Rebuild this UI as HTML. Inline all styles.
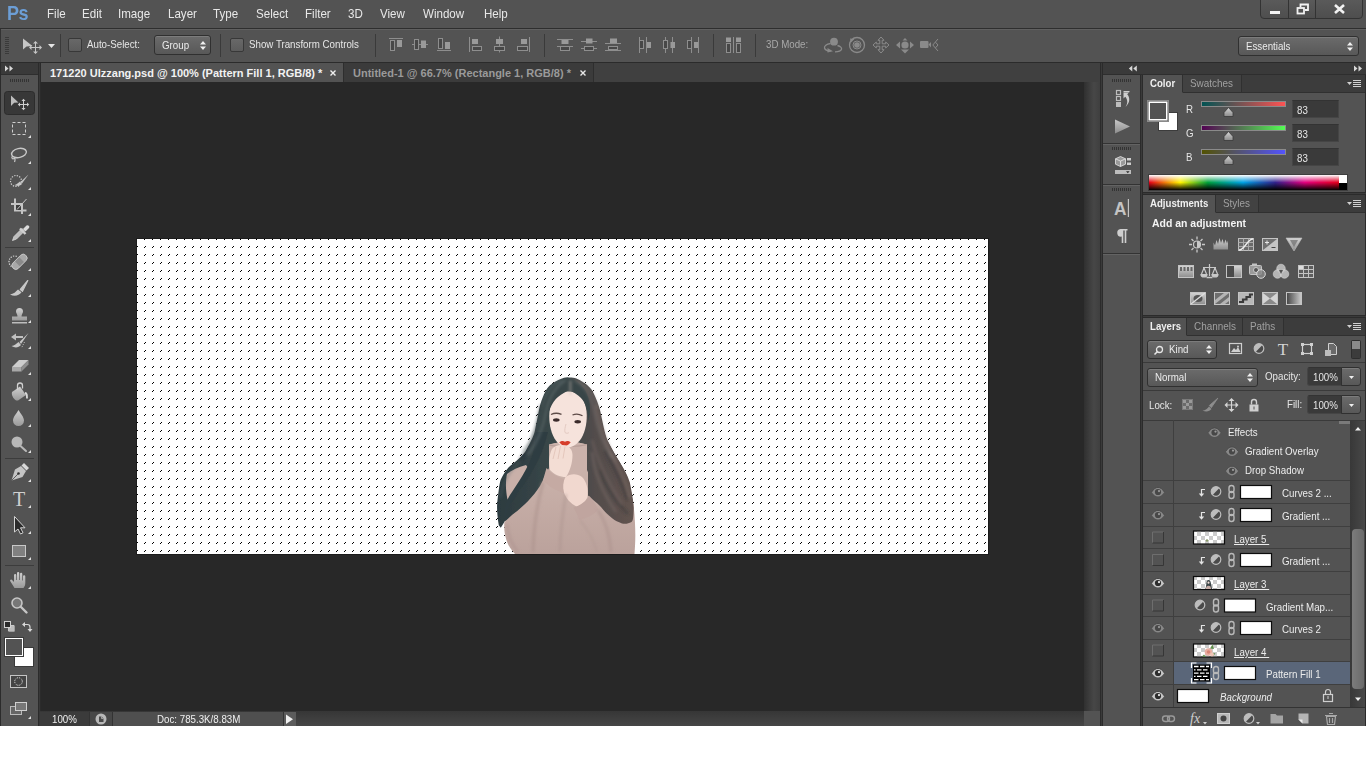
<!DOCTYPE html>
<html lang="en">
<head>
<meta charset="utf-8">
<title>Photoshop</title>
<style>
*{box-sizing:border-box;margin:0;padding:0}
html,body{width:1366px;height:768px;overflow:hidden;background:#fff}
body{font-family:"Liberation Sans","DejaVu Sans",sans-serif;font-size:11px;color:#e6e6e6;position:relative}
.abs{position:absolute}
svg{position:absolute;overflow:visible}
#app{position:absolute;left:0;top:0;width:1366px;height:726px;background:#2b2b2b;overflow:hidden}
.t{position:absolute;white-space:nowrap;line-height:14px;font-size:11px;color:#e6e6e6;transform:scaleX(.885);transform-origin:0 0}
/* menu bar */
#menubar{position:absolute;left:0;top:0;width:1366px;height:28px;background:#535353}
#menubar .mi{position:absolute;top:6px;font-size:13px;color:#e8e8e8;white-space:nowrap;transform:scaleX(.89);transform-origin:0 0}
#pslogo{position:absolute;left:7px;top:-1px;font-size:20.500px;font-weight:bold;color:#6c9ed6;letter-spacing:-0.5px;line-height:28px;transform:scaleX(.88);transform-origin:0 0}
#winctl{position:absolute;left:1260px;top:-1px;width:103px;height:20px;border:1px solid #333;border-radius:0 0 4px 4px;background:linear-gradient(#5a5a5a,#4e4e4e)}
#winctl i{position:absolute;top:0;width:1px;height:18px;background:#333}
/* options bar */
#optbar{position:absolute;left:0;top:29px;width:1366px;height:33px;background:#535353;border-top:1px solid #606060}
.vsep{position:absolute;width:1px;top:34px;height:23px;background:#3a3a3a}
.chk{position:absolute;width:14px;height:14px;border:1px solid #383838;border-radius:2px;background:linear-gradient(#686868,#5c5c5c)}
.dd{position:absolute;border:1px solid #303030;border-radius:3px;background:linear-gradient(#6b6b6b,#585858);box-shadow:inset 0 1px 0 #7c7c7c;color:#ececec;font-size:11px;white-space:nowrap}
.dd span{position:absolute;line-height:14px;transform:scaleX(.885);transform-origin:0 0}
.val{position:absolute;background:#3a3a3a;border:1px solid #454545;border-top-color:#333;color:#f0f0f0}
/* tabs */
#tabbar{position:absolute;left:41px;top:63px;width:1059px;height:19px;background:#404040}
.tab{position:absolute;top:0;height:19px;font-size:11px;line-height:21px;white-space:nowrap}
/* canvas */
#work{position:absolute;left:41px;top:82px;width:1043px;height:629px;background:#282828}
#vscroll{position:absolute;left:1084px;top:82px;width:16px;height:629px;background:linear-gradient(90deg,#303030 0%,#474747 62%,#3f3f3f 100%)}
#status{position:absolute;left:40px;top:711px;width:1060px;height:15px;background:linear-gradient(#363636,#464646)}
#status div{position:absolute;top:1px;height:14px}
/* toolbox */
#toolbox{position:absolute;left:1px;top:63px;width:37px;height:663px;background:#535353}
/* right */
#rstrip{position:absolute;left:1103px;top:63px;width:37px;height:663px;background:#535353}
#rpanels{position:absolute;left:1143px;top:63px;width:223px;height:663px;background:#535353}
.hdr{position:absolute;left:0;top:0;height:12px;background:#3a3a3a;border-bottom:1px solid #2e2e2e}
.ptabs{position:absolute;left:0;width:221px;height:18px;background:#3c3c3c;border-bottom:1px solid #303030}
.ptab{position:absolute;top:0;height:18px;line-height:17px;font-size:11px;color:#a0a0a0;background:#424242;border-right:1px solid #303030;border-bottom:1px solid #303030;padding-left:7px;white-space:nowrap}
.ptab span{display:inline-block;transform:scaleX(.9);transform-origin:0 50%}
.ptab.on span{transform:scaleX(.875)}
.ptab.on{background:#535353;color:#f0f0f0;font-weight:bold;border-bottom:1px solid #535353;height:18px}
.hsep{position:absolute;left:0;width:221px;height:1px;background:#3a3a3a}
.lrow{position:absolute;left:0;width:207px;border-top:1px solid #3f3f3f}
.lname{position:absolute;font-size:11px;line-height:14px;color:#ececec;white-space:nowrap;transform:scaleX(.885);transform-origin:0 0}
.mask{position:absolute;width:32px;height:14px;background:#fff;border:1px solid #2a2a2a}
.box11{position:absolute;left:9px;width:12px;height:12px;border:1px solid #3c3c3c;background:#555;box-shadow:inset 0 0 0 1px #5a5a5a}
</style>
</head>
<body>
<div id="app">
  <div id="menubar">
    <div id="pslogo">Ps</div>
    <div class="mi" style="left:47px">File</div>
    <div class="mi" style="left:82px">Edit</div>
    <div class="mi" style="left:118px">Image</div>
    <div class="mi" style="left:168px">Layer</div>
    <div class="mi" style="left:213px">Type</div>
    <div class="mi" style="left:256px">Select</div>
    <div class="mi" style="left:305px">Filter</div>
    <div class="mi" style="left:348px">3D</div>
    <div class="mi" style="left:380px">View</div>
    <div class="mi" style="left:423px">Window</div>
    <div class="mi" style="left:484px">Help</div>
    <div id="winctl"><i style="left:27px"></i><i style="left:54px"></i>
      <svg style="left:0;top:0" width="102" height="19" viewBox="0 0 102 19">
        <rect x="9" y="11" width="10" height="3" fill="#f2f2f2"/>
        <g fill="none" stroke="#f2f2f2" stroke-width="1.800"><rect x="36.500" y="8" width="6.500" height="5.500"/><path d="M39.500 7V4.500h7.500v5.500h-3"/></g>
        <path d="M74 5l9 8M83 5l-9 8" stroke="#f2f2f2" stroke-width="2.600" fill="none"/>
      </svg>
    </div>
  </div>
  <div class="abs" style="left:0;top:28px;width:1366px;height:1px;background:#2e2e2e"></div>
  <div id="optbar"></div>
  <div id="optleft" class="abs" style="left:0;top:29px;width:1px;height:33px;background:#333"></div>
  <div class="abs" style="left:0;top:62px;width:1366px;height:1px;background:#2b2b2b"></div>
  <!-- options bar contents in page coordinates -->
  <svg style="left:0;top:0" width="1366" height="63" viewBox="0 0 1366 63">
    <g fill="#3a3a3a">
      <rect x="5" y="37" width="4" height="1"/><rect x="5" y="39" width="4" height="1"/><rect x="5" y="41" width="4" height="1"/><rect x="5" y="43" width="4" height="1"/><rect x="5" y="45" width="4" height="1"/><rect x="5" y="47" width="4" height="1"/><rect x="5" y="49" width="4" height="1"/><rect x="5" y="51" width="4" height="1"/><rect x="5" y="53" width="4" height="1"/>
    </g>
    <!-- move tool -->
    <path d="M23 38.500V49.500L26.500 46.500L32.500 46Z" fill="#c6c6c6"/>
    <g fill="none" stroke="#c6c6c6" stroke-width="1"><path d="M31 47.500h9M35.500 43v9"/></g>
    <path d="M35.500 41l-2.500 2.500h5zM35.500 54l-2.500-2.500h5zM29 47.500l2.500-2.500v5zM42 47.500l-2.500-2.500v5z" fill="#c6c6c6"/>
    <path d="M48 44h7l-3.500 4z" fill="#e6e6e6"/>
    <!-- align icons group 1 -->
    <g fill="#474747" stroke="#8e8e8e" stroke-width="1">
      <rect x="390.500" y="40.500" width="4" height="10"/>
      <rect x="414.500" y="39.500" width="4" height="10"/>
      <rect x="438.500" y="38.500" width="4" height="10"/>
      <rect x="472.500" y="46.500" width="9" height="4"/>
      <rect x="494.500" y="46.500" width="10" height="4"/>
      <rect x="517.500" y="46.500" width="10" height="4"/>
      <rect x="560.500" y="46.500" width="9" height="4"/>
      <rect x="584.500" y="46.500" width="9" height="4"/>
      <rect x="608.500" y="46.500" width="9" height="3"/>
      <rect x="639.500" y="40.500" width="4" height="8"/>
      <rect x="663.500" y="40.500" width="4" height="8"/>
      <rect x="687.500" y="40.500" width="4" height="8"/>
      <rect x="726.500" y="43.500" width="4" height="9"/>
      <rect x="736.500" y="43.500" width="4" height="9"/>
    </g>
    <g fill="none" stroke="#8e8e8e" stroke-width="1">
      <path d="M389 38.500h14"/>
      <path d="M412 44.500h2M419 44.500h2M426 44.500h2"/>
      <path d="M437 50.500h14"/>
      <path d="M469.500 37v15"/>
      <path d="M499.500 36.500v2.500M499.500 44v2.500M499.500 51v1.500"/>
      <path d="M529.500 37v15"/>
      <path d="M557 39.500h16M557 46.500h3M570 46.500h3"/>
      <path d="M581 41.500h16M581 48.500h3M594 48.500h3"/>
      <path d="M605 43.500h16M605 50.500h16"/>
      <path d="M639.500 37v16M646.500 37v16"/>
      <path d="M665.500 37v3M665.500 49v4M672.500 37v16"/>
      <path d="M691.500 37v16M698.500 37v16"/>
      <path d="M733.500 37v16"/>
    </g>
    <g fill="#999">
      <rect x="397" y="40" width="5" height="7"/>
      <rect x="421" y="40.500" width="5" height="7.500"/>
      <rect x="445" y="42" width="5" height="7"/>
      <rect x="472" y="39" width="6" height="5"/>
      <rect x="496" y="39" width="7" height="5"/>
      <rect x="521" y="39" width="6" height="5"/>
      <rect x="561.500" y="40" width="7" height="4"/>
      <rect x="586" y="38.500" width="6.500" height="5"/>
      <rect x="610" y="38.500" width="7" height="4.500"/>
      <rect x="647" y="42" width="4" height="6"/>
      <rect x="670.500" y="42" width="4.500" height="6"/>
      <rect x="694" y="42" width="4" height="6"/>
      <rect x="726" y="37.500" width="5" height="4.500"/><rect x="736" y="37.500" width="5" height="4.500"/>
    </g>
    <!-- 3D mode icons -->
    <g fill="none" stroke="#8a8a8a" stroke-width="1.300">
      <path d="M830.500 43.500c-4 .5-6.500 2.500-6 4.500s3 3 6 3.200M837.500 45.500c3 .8 4.500 2.300 4 3.800s-3 2.500-6.500 2.500"/>
      <circle cx="857" cy="45" r="7.500"/><circle cx="857" cy="45" r="4" stroke-width="1"/>
      <path d="M881 37l3 3.300h-1.800v3.500h3.500v-1.800l3.300 3-3.300 3v-1.800h-3.500v3.500h1.800l-3 3.300-3-3.300h1.800v-3.500h-3.500v1.800l-3.300-3 3.300-3v1.800h3.500v-3.500h-1.800z" stroke-width="1"/>
      <path d="M938 39l-5.200 6 5.200 6M935.500 42.200l2.500 2.800-2.500 2.800" stroke-width="1"/>
    </g>
    <g fill="#8a8a8a">
      <circle cx="834" cy="41.700" r="3.900"/>
      <path d="M827.500 48l5.500 3.200-5.500 1.300z"/>
      <path d="M850 38.500l4.500 .5-3.500 3.500z"/>
      <circle cx="857" cy="45" r="2.800"/>
      <circle cx="905" cy="45" r="3.600"/>
      <path d="M905 38l-2.500 2.500h5zM905 53.500l-4-4h8zM896 45l4-3.500v7zM914 45l-4-3.500v7z"/>
      <rect x="920" y="41" width="8.500" height="7" rx="1"/><path d="M928.500 44.500l2.500-2.500v5.500z"/>
    </g>
  </svg>
  <div class="vsep" style="left:60px"></div>
  <div class="chk" style="left:68px;top:38px"></div>
  <div class="t" style="left:87px;top:37px">Auto-Select:</div>
  <div class="dd" style="left:154px;top:35px;width:57px;height:20px"><span style="left:7px;top:2px">Group</span>
    <svg style="left:44px;top:4px" width="8" height="11" viewBox="0 0 8 11"><path d="M1 4.500L4 1l3 3.500zM1 6.500L4 10l3-3.500z" fill="#f0f0f0"/></svg></div>
  <div class="vsep" style="left:220px"></div>
  <div class="chk" style="left:230px;top:38px"></div>
  <div class="t" style="left:249px;top:37px">Show Transform Controls</div>
  <div class="vsep" style="left:375px"></div>
  <div class="vsep" style="left:544px"></div>
  <div class="vsep" style="left:713px"></div>
  <div class="vsep" style="left:755px"></div>
  <div class="t" style="left:766px;top:37px;color:#a8a8a8">3D Mode:</div>
  <div class="dd" style="left:1238px;top:36px;width:121px;height:20px"><span style="left:7px;top:2px">Essentials</span>
    <svg style="left:107px;top:4px" width="8" height="11" viewBox="0 0 8 11"><path d="M1 4.500L4 1l3 3.500zM1 6.500L4 10l3-3.500z" fill="#f0f0f0"/></svg></div>
  <!-- document tabs -->
  <div id="tabbar">
    <div class="tab" style="left:0;width:303px;background:#535353;color:#f2f2f2;font-weight:bold;border-right:1px solid #2e2e2e"><span class="abs" style="left:9px;">171220 Ulzzang.psd @ 100% (Pattern Fill 1, RGB/8) *</span>
      <svg style="left:288px;top:6px" width="8" height="8" viewBox="0 0 8 8"><path d="M1.500 1.500l5 5M6.500 1.500l-5 5" stroke="#f0f0f0" stroke-width="1.400"/></svg></div>
    <div class="tab" style="left:303px;width:250px;background:#3b3b3b;color:#9a9a9a;font-weight:bold;border-right:1px solid #2e2e2e"><span class="abs" style="left:9px">Untitled-1 @ 66.7% (Rectangle 1, RGB/8) *</span>
      <svg style="left:235px;top:6px" width="8" height="8" viewBox="0 0 8 8"><path d="M1.500 1.500l5 5M6.500 1.500l-5 5" stroke="#e8e8e8" stroke-width="1.400"/></svg></div>
  </div>
  <div id="work">
    <!-- canvas: page coords 137,239 851x315 -->
    <div class="abs" style="left:95px;top:156px;width:853px;height:317px;background:#1c1c1c"></div>
    <svg style="left:96px;top:157px" width="851" height="315" viewBox="0 0 851 315">
      <defs>
        <pattern id="dots" x="0" y="0" width="8" height="8" patternUnits="userSpaceOnUse">
          <rect x="7" y="0" width="1" height="1" fill="#000"/><rect x="0" y="7" width="1" height="1" fill="#000"/>
        </pattern>
      </defs>
      <rect x="0" y="0" width="851" height="315" fill="#fff"/>
      <rect x="0" y="0" width="851" height="315" fill="url(#dots)" shape-rendering="crispEdges"/>
      <!--GIRLSTART-->
      <defs>
        <filter id="soft" x="-5%" y="-5%" width="110%" height="110%"><feGaussianBlur stdDeviation="0.6"/></filter>
        <filter id="soft2" x="-10%" y="-10%" width="120%" height="120%"><feGaussianBlur stdDeviation="1.400"/></filter>
        <linearGradient id="hairg" gradientUnits="userSpaceOnUse" x1="497" y1="0" x2="634" y2="0"><stop offset="0" stop-color="#2c3b40"/><stop offset=".45" stop-color="#3b4849"/><stop offset=".7" stop-color="#514c4b"/><stop offset="1" stop-color="#62534f"/></linearGradient>
        <linearGradient id="swg" gradientUnits="userSpaceOnUse" x1="0" y1="445" x2="0" y2="553"><stop offset="0" stop-color="#cfb7af"/><stop offset="1" stop-color="#bba29c"/></linearGradient>
        <clipPath id="cv"><rect x="137" y="239" width="851" height="315"/></clipPath>
      </defs>
      <g transform="translate(-137 -239)" clip-path="url(#cv)">
       <g filter="url(#soft)">
        <!-- hair silhouette -->
        <path d="M567.300 377.500C563 377.500 558 379.300 550 385.300C546 389 544 393.700 540.400 404C539 409 537.800 417 535 430C534 435 531.600 440.500 525.600 451C523 455 519 458.800 511 465.300C508 467.500 504.700 471.800 500.800 479.600C499.500 483 498.800 490 497.200 503C496.800 508 497.200 516 498.800 525.200L500.800 527.800L505 521L540 515L600 510L615 513.500C618 517 623 521 629.800 522.600C632 522 633.200 518.700 633.700 508.300C633.700 503 632.400 495.200 629.800 482.200C628.500 478 625.900 471.800 619.400 461.400C616.500 457 612.800 451 607.600 440.500C605.500 436 603.700 427.500 601 414.500C600 409 597.700 401.500 592.500 391C590 387 585.500 382.700 576.400 378.500C574 377.600 571 377.300 567.300 377.500Z" fill="url(#hairg)"/>
        <!-- left shoulder patch -->
        <path d="M507 474C512 470 518 467 526 465L529 469C527 479 520 491 513 498L507.500 499.500C505.500 490 505.500 481 507 474Z" fill="#c9b0a9"/>
        <!-- sweater body + sleeves -->
        <path d="M504.500 522L512 515C520 509 531 500 540 486L549 468V444.500C556 442.500 562 442 568 442C575 442 581 442.800 587 444.500V470L598 496L612 504L633.500 504C636 528 635.500 542 634.500 554H515C508 547 503 536 504.500 521Z" fill="url(#swg)"/>
        <!-- inner left hair lock crossing to lower-left -->
        <path d="M548 432C545 445 540 458 533 470C527 481 519 492 509 506L504.500 521C503 512 505 503 510 495C518 483 527 470 532 456C534 448 536 440 536 432Z" fill="#2f3e42"/>
        <!-- right hair over sweater edge waves -->
        <path d="M588 424L601.500 420C603 428 604 433 607 440C612 450 620 462 626 474C630 484 632 496 633.700 508C633.500 518 633 521 631.500 522C628 524 625 524 622 523.400C618 522 615 520.500 612.500 518.500C608 515 604 511 601 507C596 502 592 499 588 495.500Z" fill="url(#hairg)"/>
        <!-- collar -->
        <path d="M549 445C556 442.500 562 442 568 442C575 442 581 442.800 587 444.500V468C583 474 577 478 568 478C560 478 553 474 549 468Z" fill="#cbb2ab"/>
        <path d="M549 445C556 447 580 447 587 444.500" stroke="#b69d97" stroke-width="1.200" fill="none"/>
        <!-- face -->
        <path d="M568 391.500C577 391.500 585 397 586.500 411C587.500 421 585.500 431 581.500 438C577.500 444 572.500 447.500 568 447.500C563.500 447.500 558 444.500 554.500 438.500C550.500 431.500 548.500 421.500 549.500 411.500C551 397.500 559 391.500 568 391.500Z" fill="#f6e3dc"/>
        <!-- fringe / part -->
        <path d="M567.300 377.500C558 380 550 387 546.500 400C545 406 545.500 414 547 421C548 411 552 402 558 397C562 393.500 566 392 568.500 390C573 392 580 395 584 402C586.500 407 588 414 588.500 421C590.500 413 590.500 405 588.500 398C586 389 579 380 567.300 377.500Z" fill="#384547"/>
        <!-- eyes brows lips nose -->
        <ellipse cx="556.300" cy="420" rx="3.300" ry="1.700" fill="#3a2c2c"/><ellipse cx="577.700" cy="421.700" rx="3.300" ry="1.700" fill="#3a2c2c"/>
        <path d="M551 414.500c3.200-1.600 7-1.600 10.500-.2M572.500 415c3.200-1.500 7-1 10 .8" stroke="#5d4b47" stroke-width="1.300" fill="none"/>
        <path d="M559.300 442.300c2.300-1.800 4.300-1.300 5.700-.6 1.400-.7 3.400-1.200 5.700.6-1.800 2.600-3.800 3.300-5.700 3.300s-3.900-.7-5.700-3.300z" fill="#d63c2c"/>
        <path d="M566 424c-.8 3-1.600 6-1 8.500 1 1 3 1 4 0" stroke="#e4cbc3" stroke-width="1" fill="none"/>
        <!-- hand 1 (upper) -->
        <path d="M552 449C555 445.500 560 444 565 445.500C569 446.500 572.500 449 572.500 455C572.500 463 570 471 566 477C560 477 554 474.500 550 470C548.500 462 549 455 552 449Z" fill="#f3ddd4"/>
        <path d="M556 447l-3 12M560.500 446l-2.500 13M565 446.500l-2 12" stroke="#e2c4b9" stroke-width=".9" fill="none"/>
        <!-- cuff 1 -->
        <path d="M546.500 468C552 474.500 560 478.500 569 480L564.500 493C556 491 548.500 486.500 543 480Z" fill="#c5aaa3"/>
        <!-- hand 2 (lower) -->
        <path d="M565.500 477C570 473.500 577 473 582 477C586.500 481.500 588.500 489 587.500 497C585.500 502 581.500 505.500 576.500 506.500C570.500 503.500 566 498.500 564 492.500C562.500 487 563 481.500 565.500 477Z" fill="#f1d8cf"/>
        <!-- cuff 2 -->
        <path d="M573.500 507.500C580 505.500 586 501.500 589.500 496L598.500 509C593.500 515 587 518.500 579.500 519.500Z" fill="#c0a59f"/>
       </g>
       <!-- shading -->
       <g filter="url(#soft2)" fill="none">
        <path d="M543 482C538 500 534 520 533 552" stroke="#a78e89" stroke-width="3" opacity=".55"/>
        <path d="M566 494C563 512 560 530 560 552" stroke="#a78e89" stroke-width="2.500" opacity=".45"/>
        <path d="M598 510C606 522 610 536 611 552" stroke="#a78e89" stroke-width="3" opacity=".5"/>
        <path d="M580 520C588 530 594 540 597 552" stroke="#ad948e" stroke-width="2" opacity=".45"/>
        <path d="M596 405C600 425 606 445 616 462" stroke="#7a6a66" stroke-width="2.500" opacity=".6"/>
        <path d="M605 450C612 466 622 480 627 500" stroke="#2f3336" stroke-width="3" opacity=".5"/>
        <path d="M592 440C598 462 608 482 622 504" stroke="#7b6b67" stroke-width="2" opacity=".5"/>
        <path d="M541 405C538 425 532 445 520 460" stroke="#1f2c30" stroke-width="3" opacity=".5"/>
        <path d="M570.400 380.500V395" stroke="#cdbdb5" stroke-width="1.200" opacity=".8"/>
        <path d="M566 380C556 386 549 397 546 412C543 428 538 442 528 455" stroke="#7b8789" stroke-width="1.600" opacity=".5"/>
        <path d="M562 380C552 384 545 394 542 407C539 424 534 438 522 452" stroke="#6d797b" stroke-width="1.400" opacity=".45"/>
        <path d="M574 380C584 385 591 396 594 410C597 426 602 442 612 458" stroke="#8b8481" stroke-width="1.600" opacity=".5"/>
        <path d="M578 381C588 386 595 396 598 408" stroke="#8f8986" stroke-width="1.400" opacity=".45"/>
        <path d="M610 452C618 466 626 480 630 498" stroke="#8c7d78" stroke-width="1.600" opacity=".5"/>
        <path d="M520 462C510 470 503 482 500 498" stroke="#566467" stroke-width="1.600" opacity=".5"/>
        <path d="M507 524C508 535 512 545 518 552" stroke="#a78e89" stroke-width="2.500" opacity=".5"/>
        <path d="M592 452C594 472 602 492 616 512" stroke="#84736e" stroke-width="2" opacity=".55"/>
        <path d="M600 470C606 488 616 502 628 514" stroke="#2e3033" stroke-width="2.500" opacity=".45"/>
       </g>
      </g>
      <!--GIRLEND-->
    </svg>
  </div>
  <div id="vscroll"></div>
  <div class="abs" style="left:1101px;top:63px;width:1px;height:663px;background:#3a3a3a"></div>
  <div class="abs" style="left:1141px;top:75px;width:1px;height:651px;background:#3a3a3a"></div>
  <div class="abs" style="left:39px;top:63px;width:1px;height:663px;background:#383838"></div>
  <div id="status">
    <div style="left:0;width:49px;background:#3b3b3b"></div>
    <div style="left:49px;width:23px;background:#474747;border-left:1px solid #333"></div>
    <div style="left:72px;width:171px;background:#4f4f4f;border-left:1px solid #333"></div>
    <div style="left:243px;width:13px;background:#5c5c5c;border-left:1px solid #333"></div>
    <div style="left:1044px;top:0;height:15px;width:16px;background:#535353"></div>
    <span class="t" style="left:12px;top:1px;color:#f0f0f0">100%</span>
    <span class="t" style="left:117px;top:1px;color:#f0f0f0">Doc: 785.3K/8.83M</span>
    <svg style="left:0;top:0" width="300" height="15" viewBox="40 711 300 15">
      <circle cx="101" cy="719" r="5.500" fill="#b8b8b8"/><path d="M99 716.500h2.500l2 2v3.500h-4.500z" fill="#4a4a4a"/><path d="M101.500 716.500v2h2" fill="none" stroke="#b8b8b8" stroke-width="0.800"/>
      <path d="M286 714.500v9.500l7-4.750z" fill="#f0f0f0"/>
    </svg>
  </div>
  <!-- toolbox -->
  <div id="toolbox">
    <div class="hdr" style="width:37px"></div>
  </div>
  <svg style="left:0;top:63px" width="39" height="663" viewBox="0 63 39 663">
    <defs>
      <linearGradient id="tg" x1="0" y1="0" x2="0" y2="1"><stop offset="0" stop-color="#d0d0d0"/><stop offset="1" stop-color="#9a9a9a"/></linearGradient>
    </defs>
    <!-- expand arrows -->
    <path d="M5 65.500l3.500 3-3.500 3zM9.500 65.500l3.500 3-3.500 3z" fill="#d8d8d8"/>
    <!-- grip -->
    <g fill="#333"><rect x="10" y="79" width="1" height="3"/><rect x="12" y="79" width="1" height="3"/><rect x="14" y="79" width="1" height="3"/><rect x="16" y="79" width="1" height="3"/><rect x="18" y="79" width="1" height="3"/><rect x="20" y="79" width="1" height="3"/><rect x="22" y="79" width="1" height="3"/><rect x="24" y="79" width="1" height="3"/><rect x="26" y="79" width="1" height="3"/><rect x="28" y="79" width="1" height="3"/></g>
    <!-- selected tool bg -->
    <rect x="4.500" y="91.500" width="30" height="23" rx="3" fill="#383838" stroke="#2c2c2c"/>
    <!-- move -->
    <path d="M11 95.500V106L14.200 102.800L18.500 102.600Z" fill="#bdbdbd"/>
    <path d="M19.500 104.500h8M23.500 100.500v8" stroke="#d0d0d0" fill="none"/>
    <path d="M23.500 98.800l-2 2.200h4zM23.500 110.200l-2-2.200h4zM17.800 104.500l2.200-2v4zM29.200 104.500l-2.200-2v4z" fill="#d0d0d0"/>
    <!-- marquee -->
    <rect x="12.500" y="122.500" width="13" height="12" fill="none" stroke="#cfcfcf" stroke-dasharray="3 2"/>
    <!-- lasso -->
    <ellipse cx="19" cy="153" rx="7.500" ry="4.500" fill="none" stroke="#c8c8c8" stroke-width="1.400" transform="rotate(-12 19 153)"/>
    <path d="M12.500 156.500c-1.500 1 0 3 1.500 2s1 2.500 .5 3.500" fill="none" stroke="#c8c8c8" stroke-width="1.200"/>
    <!-- quick selection -->
    <circle cx="16" cy="181" r="5.500" fill="none" stroke="#d0d0d0" stroke-width="1.200" stroke-dasharray="1.300 1.300"/>
    <path d="M28.500 174.500l-8 7.500 1.500 1.500z" fill="#c4c4c4"/><path d="M14.500 185c2-.5 4-2.500 5.500-3.500l2 2.500c-2 2-5 2.500-7.500 1z" fill="#c8c8c8"/>
    <!-- crop -->
    <path d="M15 198.500v12h11.500M11 204h11v10" fill="none" stroke="#c4c4c4" stroke-width="2"/><rect x="16" y="205" width="5" height="5" fill="#3e3e3e"/><path d="M17 209.500l9.500-10.500" stroke="#c8c8c8" stroke-width="1"/>
    <!-- eyedropper -->
    <path d="M12.500 240.500l1.500-4 8-8 2.500 2.500-8 8z" fill="#bdbdbd" stroke="#d8d8d8" stroke-width=".8"/><path d="M20 228.500l5.500 5.500" stroke="#d0d0d0" stroke-width="2.400"/><path d="M23 229l3.500-3.500a1.800 1.800 0 012.500 2.500l-3.500 3.500z" fill="#dcdcdc"/>
    <!-- separator -->
    <rect x="5" y="247" width="29" height="1" fill="#3c3c3c"/>
    <!-- healing -->
    <path d="M11.500 266.500a5 5 0 01 6.500-9.500" fill="none" stroke="#d8d8d8" stroke-width="1.200" stroke-dasharray="1.200 1.300"/>
    <rect x="10.500" y="258" width="18" height="7.600" rx="3.500" fill="#a8a8a8" stroke="#d0d0d0" stroke-width=".8" transform="rotate(-45 19.500 261.800)"/>
    <rect x="16.500" y="258.500" width="6" height="6.600" fill="#8a8a8a" transform="rotate(-45 19.500 261.800)"/>
    <!-- brush -->
    <path d="M27.800 280.500l-7.500 9 2.200 1.800z" fill="#c8c8c8" stroke="#c8c8c8" stroke-width="1.200" stroke-linejoin="round"/><path d="M10 294.500c3.500-.3 6-3 8-5l3.500 2.800c-2.500 3.500-7 4.500-11.500 2.200z" fill="#c8c8c8"/>
    <!-- stamp -->
    <g transform="translate(0 -2)"><path d="M16 313.500a3.500 3.500 0 117 0c0 2-1.500 2.500-1.500 5h5.500v4h-15v-4h5.500c0-2.500-1.500-3-1.500-5z" fill="url(#tg)"/><rect x="12" y="324" width="15" height="1.500" fill="#bdbdbd"/></g>
    <!-- history brush -->
    <path d="M28.500 333l-9 9 1.500 2z" fill="#c6c6c6"/><path d="M11.500 346c3 0 5-2.500 7-4l2.500 3c-2.500 3-6.500 3-9.500 1z" fill="#c8c8c8"/><path d="M11 337l5-3.500v2.500h7v2h-7v2.500z" fill="#c0c0c0"/>
    <path d="M24.500 342l-3 6" stroke="#c0c0c0" stroke-dasharray="1 1.200" fill="none"/>
    <!-- eraser -->
    <path d="M12 367l7-7h9.500l-7 7z" fill="#cdcdcd"/><path d="M12 367h9.500v4.500h-9.500z" fill="#a8a8a8"/><path d="M21.500 367l7-7v4.500l-7 7z" fill="#8e8e8e"/>
    <!-- bucket -->
    <path d="M12 392l8-5.500 6 8.500-8 5.500c-3 1-7-4.500-6-8.500z" fill="url(#tg)"/><path d="M17.500 390v-4.500a2.500 2.500 0 015 0v3" fill="none" stroke="#d0d0d0" stroke-width="1.300"/><path d="M25 393c2 0 2 2 2 5.500" fill="none" stroke="#d8d8d8" stroke-width="1.800"/>
    <!-- blur drop -->
    <path d="M18.500 410c2 3.500 5.500 7 5.500 10.500a5.500 5.500 0 01-11 0c0-3.500 3.500-7 5.500-10.500z" fill="url(#tg)"/>
    <!-- dodge -->
    <circle cx="17" cy="442" r="5.500" fill="#b8b8b8"/><path d="M20.500 446l5.500 5" stroke="#b8b8b8" stroke-width="2" stroke-linecap="round"/>
    <!-- separator -->
    <rect x="5" y="458" width="29" height="1" fill="#3c3c3c"/>
    <!-- pen -->
    <path d="M11.500 480.500l3.500-11 6-3.500 5 5-3.500 6z" fill="#c4c4c4"/><circle cx="18.500" cy="473.500" r="1.300" fill="#333"/><path d="M11.500 480.500l6.500-6.500" stroke="#444" stroke-width=".8"/><path d="M21.500 465.500l2.500-2.500 5 5-2.500 2.500z" fill="#d8d8d8"/>
    <!-- T -->
    <text x="19" y="505.500" font-family="Liberation Serif,serif" font-size="20" text-anchor="middle" fill="#cfcfcf">T</text>
    <!-- path select -->
    <path d="M14.500 516.500v15.500l3.500-3 2.500 5 2.500-1.200-2.500-5h4.500z" fill="#2a2a2a" stroke="#d4d4d4" stroke-width="1"/>
    <!-- rectangle -->
    <rect x="12.500" y="545.500" width="13" height="11" fill="#808080" stroke="#c8c8c8"/>
    <!-- separator -->
    <rect x="5" y="565" width="29" height="1" fill="#3c3c3c"/>
    <!-- hand -->
    <path d="M14 582V575.200a1.150 1.150 0 0 1 2.300 0V580h.7V573.200a1.150 1.150 0 0 1 2.300 0V580h.7V573.900a1.150 1.150 0 0 1 2.300 0V580.500h.7V576.400a1.150 1.150 0 0 1 2.300 0V583c0 2.500-1 3.500-1.800 5H14.500L10.300 581.300c-.8-1.400 1-2.400 2-1.100Z" fill="url(#tg)"/>
    <!-- zoom -->
    <circle cx="17" cy="603" r="5" fill="#777" stroke="#c6c6c6" stroke-width="1.600"/><path d="M21 607l5.500 5.500" stroke="#c6c6c6" stroke-width="2.400" stroke-linecap="round"/>
    <!-- mini default swatches -->
    <rect x="8" y="625" width="6" height="6" fill="#fff" stroke="#bbb" stroke-width="0" /><rect x="8.500" y="625.500" width="6" height="6" fill="#aaa"/><rect x="4.500" y="621.500" width="6" height="6" fill="#222" stroke="#ccc"/>
    <rect x="8.500" y="625.500" width="6" height="6" fill="#bdbdbd"/><rect x="4.500" y="621.500" width="6" height="6" fill="#2a2a2a" stroke="#d0d0d0"/>
    <!-- swap arrows -->
    <path d="M24 624.500h3.500a2.500 2.500 0 012.500 2.500v3" fill="none" stroke="#d8d8d8" stroke-width="1.200"/><path d="M22 624.500l3-2.500v5zM30 632l-2.500-3h5z" fill="#d8d8d8"/>
    <!-- fg/bg -->
    <rect x="14.500" y="647.500" width="19" height="19" fill="#fff" stroke="#3a3a3a"/>
    <rect x="4.500" y="637.500" width="19" height="19" fill="#535353" stroke="#3a3a3a"/><rect x="5.500" y="638.500" width="17" height="17" fill="none" stroke="#fff"/>
    <!-- quick mask -->
    <rect x="10.500" y="675.500" width="16" height="12" fill="#444" stroke="#c4c4c4"/><circle cx="18.500" cy="681.500" r="3.800" fill="none" stroke="#e8e8e8" stroke-dasharray="1 1"/>
    <!-- screen mode -->
    <rect x="10.500" y="706.500" width="11" height="8" fill="#666" stroke="#bbb"/><rect x="15.500" y="702.500" width="11" height="8" fill="#777" stroke="#d0d0d0"/>
    <!-- flyout triangles -->
    <g fill="#e0e0e0">
      <path d="M31 135v3h-3z"/><path d="M31 161v3h-3z"/><path d="M31 187v3h-3z"/><path d="M31 213v3h-3z"/><path d="M31 239v3h-3z"/>
      <path d="M31 268v3h-3z"/><path d="M31 294v3h-3z"/><path d="M31 320v3h-3z"/><path d="M31 346v3h-3z"/><path d="M31 372v3h-3z"/><path d="M31 398v3h-3z"/>
      <path d="M31 424v3h-3z"/><path d="M31 450v3h-3z"/><path d="M31 479v3h-3z"/><path d="M31 505v3h-3z"/><path d="M31 531v3h-3z"/><path d="M31 557v3h-3z"/>
      <path d="M31 586v3h-3z"/><path d="M31 716v3h-3z"/>
    </g>
  </svg>
  <!-- right collapsed strip -->
  <div id="rstrip">
    <div class="hdr" style="width:37px"></div>
    <div class="abs" style="left:0;top:80px;width:37px;height:2px;background:#333;border-bottom:1px solid #636363"></div>
    <div class="abs" style="left:0;top:121px;width:37px;height:2px;background:#333;border-bottom:1px solid #636363"></div>
    <div class="abs" style="left:0;top:190px;width:37px;height:2px;background:#333;border-bottom:1px solid #636363"></div>
  </div>
  <svg style="left:1103px;top:63px" width="37" height="663" viewBox="1103 63 37 663">
    <defs><linearGradient id="rg" x1="0" y1="0" x2="0" y2="1"><stop offset="0" stop-color="#c8c8c8"/><stop offset="1" stop-color="#8c8c8c"/></linearGradient></defs>
    
    <g fill="#333" id="grip2"><rect x="1112" y="79" width="1" height="3"/><rect x="1114" y="79" width="1" height="3"/><rect x="1116" y="79" width="1" height="3"/><rect x="1118" y="79" width="1" height="3"/><rect x="1120" y="79" width="1" height="3"/><rect x="1122" y="79" width="1" height="3"/><rect x="1124" y="79" width="1" height="3"/><rect x="1126" y="79" width="1" height="3"/><rect x="1128" y="79" width="1" height="3"/><rect x="1130" y="79" width="1" height="3"/></g>
    <use href="#grip2" y="68"/><use href="#grip2" y="109"/>
    <!-- history -->
    <g fill="none" stroke="#bdbdbd" stroke-width="1.200"><rect x="1116.500" y="90.500" width="4" height="4"/><rect x="1116.500" y="96.500" width="4" height="4"/></g>
    <rect x="1116" y="102" width="5" height="5" fill="#bdbdbd"/>
    <path d="M1123.500 91h6v1.200h-6z" fill="#cfcfcf"/><path d="M1123.500 92.500h5.500l-1.800 1.800c3 3 3 8.500-1.700 12.700c2.500-4 2.300-7.500-.3-10.300l-1.700 1.700z" fill="#cfcfcf"/>
    <!-- play -->
    <path d="M1115 119.500v14l15-7z" fill="url(#rg)"/>
    <!-- 3d -->
    <path d="M1120.500 156.500l5 2.300v5.400l-5 2.300-5-2.300v-5.400z" fill="#9a9a9a" stroke="#dcdcdc" stroke-width=".9"/><path d="M1115.500 158.800l5 2.300 5-2.300M1120.500 161.100v5.400" stroke="#e8e8e8" stroke-width=".8" fill="none"/>
    <rect x="1127" y="158" width="4" height="2.500" fill="#cfcfcf"/><rect x="1127" y="162.500" width="4" height="2.500" fill="#cfcfcf"/><rect x="1115" y="170" width="16" height="4" fill="#bdbdbd"/><path d="M1126 171.200h3.600l-1.800 2z" fill="#2e2e2e"/>
    <!-- A| -->
    <text x="1114" y="215" font-size="18" font-weight="bold" fill="#c4c4c4" font-family="Liberation Sans,sans-serif" textLength="12.500" lengthAdjust="spacingAndGlyphs">A</text><rect x="1127.800" y="199" width="1.200" height="18" fill="#c4c4c4"/>
    <!-- pilcrow -->
    <path d="M1120.500 229h7v1.600h-1.200v12.400h-1.600v-12.400h-1.400v12.400h-1.600v-6.400a3.800 3.800 0 01-1.200-7.600z" fill="#cfcfcf"/>
  </svg>
  <!-- right panels (page coordinates) -->
  <div class="abs" style="left:1103px;top:63px;width:263px;height:11px;background:#3a3a3a"></div>
  <div class="abs" style="left:1103px;top:74px;width:263px;height:1px;background:#2e2e2e"></div>
  <svg style="left:1128px;top:63px" width="12" height="12" viewBox="1128 63 12 12"><path d="M1132.300 65.500l-3.500 3 3.500 3zM1136.800 65.500l-3.500 3 3.500 3z" fill="#d8d8d8"/></svg>
  <svg style="left:1350px;top:63px" width="16" height="12" viewBox="1350 63 16 12"><path d="M1354 65.500l3.500 3-3.500 3zM1358.500 65.500l3.500 3-3.500 3z" fill="#d8d8d8"/></svg>
  <!-- COLOR PANEL -->
  <div class="abs" style="left:1143px;top:75px;width:222px;height:117px;background:#535353"></div>
  <div class="ptabs" style="left:1143px;top:75px;width:222px">
    <div class="ptab on" style="left:0;width:40px"><span>Color</span></div>
    <div class="ptab" style="left:40px;width:59px"><span>Swatches</span></div>
  </div>
  <svg style="left:1143px;top:75px" width="222" height="117" viewBox="1143 75 222 117">
    <defs>
      <linearGradient id="gr" x1="0" x2="1"><stop offset="0" stop-color="#005353"/><stop offset="1" stop-color="#ff5353"/></linearGradient>
      <linearGradient id="gg" x1="0" x2="1"><stop offset="0" stop-color="#530053"/><stop offset="1" stop-color="#53ff53"/></linearGradient>
      <linearGradient id="gb" x1="0" x2="1"><stop offset="0" stop-color="#535300"/><stop offset="1" stop-color="#5353ff"/></linearGradient>
      <linearGradient id="spec" x1="0" x2="1">
        <stop offset="0" stop-color="#e2001a"/><stop offset=".165" stop-color="#fff200"/><stop offset=".31" stop-color="#00a03c"/><stop offset=".495" stop-color="#00a2e4"/><stop offset=".665" stop-color="#32228c"/><stop offset=".82" stop-color="#e2007f"/><stop offset="1" stop-color="#e2001a"/>
      </linearGradient>
      <linearGradient id="specv" x1="0" y1="0" x2="0" y2="1">
        <stop offset="0" stop-color="#fff" stop-opacity="1"/><stop offset=".5" stop-color="#fff" stop-opacity="0"/><stop offset=".5" stop-color="#000" stop-opacity="0"/><stop offset="1" stop-color="#000" stop-opacity="1"/>
      </linearGradient>
      <linearGradient id="thumb" x1="0" y1="0" x2="0" y2="1"><stop offset="0" stop-color="#d8d8d8"/><stop offset="1" stop-color="#8a8a8a"/></linearGradient>
    </defs>
    <!-- panel menu icon -->
    <path d="M1347 82h5l-2.500 3z" fill="#d0d0d0"/><path d="M1353 80.500h8M1353 82.500h8M1353 84.500h8M1353 86.500h8" stroke="#d0d0d0"/>
    <!-- bg / fg swatches -->
    <rect x="1158.500" y="112.500" width="19" height="18" fill="#fff" stroke="#3c3c3c"/>
    <rect x="1147.500" y="100.500" width="21" height="21" fill="#535353" stroke="#8a8a8a"/><rect x="1149.250" y="102.250" width="17.500" height="17.500" fill="none" stroke="#fff" stroke-width="1.500"/>
    <!-- sliders -->
    <rect x="1201.500" y="101.500" width="84" height="5" fill="url(#gr)" stroke="#8a8a8a"/>
    <rect x="1201.500" y="125.500" width="84" height="5" fill="url(#gg)" stroke="#8a8a8a"/>
    <rect x="1201.500" y="149.500" width="84" height="5" fill="url(#gb)" stroke="#8a8a8a"/>
    <g fill="url(#thumb)" stroke="#3a3a3a" stroke-width=".8">
      <path d="M1228.500 107.500l4.500 5v4h-9v-4z"/><path d="M1228.500 131.500l4.500 5v4h-9v-4z"/><path d="M1228.500 155.500l4.500 5v4h-9v-4z"/>
    </g>
    <!-- spectrum -->
    <rect x="1149" y="175" width="190" height="15" fill="url(#spec)"/><rect x="1149" y="175" width="190" height="15" fill="url(#specv)"/>
    <rect x="1339" y="175" width="8" height="8" fill="#fff"/><rect x="1339" y="183" width="8" height="7" fill="#000"/>
    <rect x="1148.500" y="174.500" width="199" height="16" fill="none" stroke="#3e3e3e"/>
  </svg>
  <div class="t" style="left:1186px;top:102px;font-size:11px">R</div>
  <div class="t" style="left:1186px;top:126px;font-size:11px">G</div>
  <div class="t" style="left:1186px;top:150px;font-size:11px">B</div>
  <div class="val" style="left:1292px;top:100px;width:47px;height:18px"><span class="t" style="left:4px;top:2px">83</span></div>
  <div class="val" style="left:1292px;top:124px;width:47px;height:18px"><span class="t" style="left:4px;top:2px">83</span></div>
  <div class="val" style="left:1292px;top:148px;width:47px;height:18px"><span class="t" style="left:4px;top:2px">83</span></div>
  <!-- ADJUSTMENTS PANEL -->
  <div class="abs" style="left:1143px;top:193px;width:223px;height:1px;background:#3a3a3a"></div>
  <div class="abs" style="left:1143px;top:316px;width:223px;height:1px;background:#3a3a3a"></div>
  <div class="abs" style="left:1143px;top:195px;width:222px;height:120px;background:#535353"></div>
  <div class="ptabs" style="left:1143px;top:195px;width:222px">
    <div class="ptab on" style="left:0;width:73px"><span>Adjustments</span></div>
    <div class="ptab" style="left:73px;width:43px"><span>Styles</span></div>
  </div>
  <div class="t" style="left:1152px;top:216px;font-weight:bold;color:#f4f4f4;transform:scaleX(.95)">Add an adjustment</div>
  <svg style="left:1143px;top:195px" width="222" height="120" viewBox="1143 195 222 120">
    <defs>
      <linearGradient id="ag" x1="0" y1="0" x2="0" y2="1"><stop offset="0" stop-color="#d4d4d4"/><stop offset="1" stop-color="#8e8e8e"/></linearGradient>
      <linearGradient id="agh" x1="0" x2="1"><stop offset="0" stop-color="#444"/><stop offset="1" stop-color="#ccc"/></linearGradient>
    </defs>
    <path d="M1347 202h5l-2.500 3z" fill="#d0d0d0"/><path d="M1353 200.500h8M1353 202.500h8M1353 204.500h8M1353 206.500h8" stroke="#d0d0d0"/>
    <!-- row 1 y=244 -->
    <g stroke="#c8c8c8" fill="none">
      <circle cx="1197" cy="244.500" r="3.500" stroke-width="1.200"/><path d="M1197 241v7a3.500 3.500 0 000-7z" fill="#c8c8c8" stroke="none"/>
      <path d="M1197 236.500v3M1197 249.500v3M1189 244.500h3M1202 244.500h3M1191.500 239l2 2M1200.500 248l2 2M1191.500 250l2-2M1200.500 241l2-2" stroke-width="1.300"/>
    </g>
    <path d="M1213.500 249.500v-7l1.500 3 1.500-5.500 1.500 4 1.500-6 1.500 5 1.500-4 1.500 5 1.500-4.500 1.500 4 1-3v9z" fill="url(#ag)"/>
    <g><rect x="1238.500" y="238.500" width="15" height="12" fill="#6a6a6a" stroke="#bdbdbd"/><path d="M1243.500 238.500v12M1248.500 238.500v12M1238.500 242.500h15M1238.500 246.500h15" stroke="#a8a8a8" fill="none"/><path d="M1239 250c6 0 8-11 14-11" stroke="#f0f0f0" stroke-width="1.300" fill="none"/></g>
    <g><rect x="1262.500" y="238.500" width="15" height="12" fill="#707070" stroke="#c4c4c4"/><path d="M1263 250l14-11v11z" fill="#c4c4c4"/><path d="M1265 242.500h4M1267 240.500v4" stroke="#e8e8e8"/><path d="M1271.500 247.500h4" stroke="#444"/></g>
    <path d="M1286 238h16l-8 13z" fill="url(#ag)" stroke="#bdbdbd" stroke-width=".6"/><path d="M1290 240h8l-4 7z" fill="#6e6e6e" opacity=".7"/>
    <!-- row 2 y=271 -->
    <g><rect x="1178.500" y="265.500" width="15" height="12" fill="url(#ag)" stroke="#c4c4c4"/><rect x="1180" y="267" width="2" height="4" fill="#666"/><rect x="1183.500" y="267" width="2" height="4" fill="#666"/><rect x="1187" y="267" width="2" height="4" fill="#666"/><rect x="1190.500" y="267" width="2" height="4" fill="#666"/></g>
    <g fill="none" stroke="#c8c8c8" stroke-width="1.200"><path d="M1209.500 264v12M1203 267.500h13M1204 268l-2.500 6M1204 268l2.500 6M1215 268l-2.500 6M1215 268l2.500 6"/><path d="M1201 274.500a3 2.500 0 006 0zM1212 274.500a3 2.500 0 006 0z" fill="#c8c8c8"/><path d="M1206.500 277.500h6" stroke-width="1.500"/></g>
    <g><rect x="1226.500" y="265.500" width="15" height="12" fill="#4a4a4a" stroke="#c4c4c4"/><rect x="1234" y="266" width="7" height="11" fill="url(#ag)"/></g>
    <g><rect x="1249.500" y="265.500" width="12" height="9" rx="1" fill="#9a9a9a" stroke="#c4c4c4"/><rect x="1252" y="263.500" width="5" height="2" fill="#c4c4c4"/><circle cx="1256" cy="270" r="2.500" fill="#555" stroke="#ddd" stroke-width=".8"/><circle cx="1261" cy="274" r="4.300" fill="#888" fill-opacity=".8" stroke="#d8d8d8" stroke-width="1"/></g>
    <g fill="#c6c6c6" fill-opacity=".85" stroke="#e0e0e0" stroke-width=".5"><circle cx="1281" cy="268.500" r="4.300"/><circle cx="1277.500" cy="274" r="4.300"/><circle cx="1284.500" cy="274" r="4.300"/></g><path d="M1279 270h4l-2 4z" fill="#555"/>
    <g><rect x="1298.500" y="265.500" width="15" height="12" fill="#5e5e5e" stroke="#c4c4c4"/><path d="M1303.500 265.500v12M1308.500 265.500v12M1298.500 269.500h15M1298.500 273.500h15" stroke="#c4c4c4" fill="none"/><rect x="1299" y="266" width="4" height="3" fill="#ddd"/></g>
    <!-- row 3 y=298 -->
    <g><rect x="1190.500" y="292.500" width="15" height="12" fill="url(#ag)" stroke="#c4c4c4"/><ellipse cx="1198" cy="298.500" rx="4.500" ry="3.500" fill="#555"/><path d="M1191 304l14-11" stroke="#e0e0e0" stroke-width="1.200"/></g>
    <g><rect x="1214.500" y="292.500" width="15" height="12" fill="#6e6e6e" stroke="#c4c4c4"/><path d="M1215 300l9-7h5l-14 11zM1220 304l9-7v4l-4 3z" fill="#b4b4b4"/></g>
    <g><rect x="1238.500" y="292.500" width="15" height="12" fill="#b8b8b8" stroke="#c4c4c4"/><path d="M1239 302h4v-2.500h3.500v-2.500h3.500v-2.500h3" stroke="#3a3a3a" stroke-width="2.200" fill="none"/></g>
    <g><rect x="1262.500" y="292.500" width="15" height="12" fill="#8a8a8a" stroke="#c4c4c4"/><path d="M1263 293l7 5.500-7 5.500zM1277 293l-7 5.500 7 5.500z" fill="#d4d4d4"/></g>
    <g><rect x="1286.500" y="292.500" width="15" height="12" fill="url(#agh)" stroke="#c4c4c4"/></g>
  </svg>
  <!-- LAYERS PANEL -->
  <div class="abs" style="left:1143px;top:318px;width:222px;height:408px;background:#535353"></div>
  <div class="ptabs" style="left:1143px;top:318px;width:222px">
    <div class="ptab on" style="left:0;width:44px"><span>Layers</span></div>
    <div class="ptab" style="left:44px;width:56px"><span>Channels</span></div>
    <div class="ptab" style="left:100px;width:41px"><span>Paths</span></div>
  </div>
  <div class="dd" style="left:1147px;top:340px;width:70px;height:19px"><span style="left:21px;top:1px">Kind</span>
    <svg style="left:5px;top:4px" width="11" height="11" viewBox="0 0 11 11"><circle cx="6.500" cy="4.500" r="3" fill="none" stroke="#e6e6e6" stroke-width="1.300"/><path d="M4.500 6.500l-3 3" stroke="#e6e6e6" stroke-width="1.600"/></svg>
    <svg style="left:57px;top:3px" width="8" height="11" viewBox="0 0 8 11"><path d="M1 4.500L4 1l3 3.500zM1 6.500L4 10l3-3.500z" fill="#f0f0f0"/></svg></div>
  <div class="hsep" style="left:1143px;top:362px;width:222px"></div>
  <div class="dd" style="left:1147px;top:368px;width:111px;height:19px"><span style="left:7px;top:1px">Normal</span>
    <svg style="left:98px;top:3px" width="8" height="11" viewBox="0 0 8 11"><path d="M1 4.500L4 1l3 3.500zM1 6.500L4 10l3-3.500z" fill="#f0f0f0"/></svg></div>
  <div class="t" style="left:1265px;top:369px">Opacity:</div>
  <div class="val" style="left:1307px;top:367px;width:35px;height:19px;border-radius:3px 0 0 3px"><span class="t" style="left:5px;top:2px">100%</span></div>
  <div class="dd" style="left:1341px;top:367px;width:20px;height:19px;border-radius:0 3px 3px 0"><svg style="left:7px;top:8px" width="5" height="3" viewBox="0 0 5 3"><path d="M0 0h5l-2.500 3z" fill="#f0f0f0"/></svg></div>
  <div class="hsep" style="left:1143px;top:390px;width:222px"></div>
  <div class="t" style="left:1149px;top:398px">Lock:</div>
  <div class="t" style="left:1287px;top:397px">Fill:</div>
  <div class="val" style="left:1307px;top:395px;width:35px;height:19px;border-radius:3px 0 0 3px"><span class="t" style="left:5px;top:2px">100%</span></div>
  <div class="dd" style="left:1341px;top:395px;width:20px;height:19px;border-radius:0 3px 3px 0"><svg style="left:7px;top:8px" width="5" height="3" viewBox="0 0 5 3"><path d="M0 0h5l-2.500 3z" fill="#f0f0f0"/></svg></div>
  <div class="abs" style="left:1143px;top:420px;width:207px;height:288px;background:#535353;border-top:1px solid #3a3a3a"></div>
  <div class="abs" style="left:1350px;top:420px;width:15px;height:288px;background:linear-gradient(90deg,#383838,#484848);border-top:1px solid #3a3a3a"></div>
  <div class="abs" style="left:1352px;top:529px;width:12px;height:160px;border-radius:4px;background:linear-gradient(90deg,#7c7c7c,#6a6a6a)"></div>
  <div class="abs" style="left:1173px;top:420px;width:1px;height:288px;background:#3f3f3f"></div>
  <div class="abs" style="left:1174px;top:662px;width:176px;height:22px;background:#5a6679"></div>
  <div class="abs" style="left:1143px;top:480px;width:207px;height:1px;background:#3f3f3f"></div>
  <div class="abs" style="left:1143px;top:503px;width:207px;height:1px;background:#3f3f3f"></div>
  <div class="abs" style="left:1143px;top:526px;width:207px;height:1px;background:#3f3f3f"></div>
  <div class="abs" style="left:1143px;top:548px;width:207px;height:1px;background:#3f3f3f"></div>
  <div class="abs" style="left:1143px;top:571px;width:207px;height:1px;background:#3f3f3f"></div>
  <div class="abs" style="left:1143px;top:594px;width:207px;height:1px;background:#3f3f3f"></div>
  <div class="abs" style="left:1143px;top:616px;width:207px;height:1px;background:#3f3f3f"></div>
  <div class="abs" style="left:1143px;top:639px;width:207px;height:1px;background:#3f3f3f"></div>
  <div class="abs" style="left:1143px;top:661px;width:207px;height:1px;background:#3f3f3f"></div>
  <div class="abs" style="left:1143px;top:684px;width:207px;height:1px;background:#3f3f3f"></div>
  <div class="abs" style="left:1143px;top:707px;width:207px;height:1px;background:#3f3f3f"></div>
  <div class="abs" style="left:1143px;top:707px;width:222px;height:1px;background:#333"></div>
  <div class="lname" style="left:1228px;top:425px;">Effects</div>
  <div class="lname" style="left:1245px;top:444px;">Gradient Overlay</div>
  <div class="lname" style="left:1245px;top:463px;">Drop Shadow</div>
  <div class="lname" style="left:1282px;top:486px;">Curves 2 ...</div>
  <div class="lname" style="left:1282px;top:509px;">Gradient ...</div>
  <div class="lname" style="left:1234px;top:532px;text-decoration:underline">Layer 5&nbsp;</div>
  <div class="lname" style="left:1282px;top:554px;">Gradient ...</div>
  <div class="lname" style="left:1234px;top:577px;text-decoration:underline">Layer 3&nbsp;</div>
  <div class="lname" style="left:1266px;top:600px;">Gradient Map...</div>
  <div class="lname" style="left:1282px;top:622px;">Curves 2</div>
  <div class="lname" style="left:1234px;top:645px;text-decoration:underline">Layer 4&nbsp;</div>
  <div class="lname" style="left:1266px;top:667px;">Pattern Fill 1</div>
  <div class="lname" style="left:1220px;top:690px;font-style:italic">Background</div>
  <svg style="left:1143px;top:318px" width="223" height="408" viewBox="1143 318 223 408">
    <defs>
      <pattern id="chk" x="1" y="0" width="8" height="8" patternUnits="userSpaceOnUse"><rect width="8" height="8" fill="#fff"/><rect width="4" height="4" fill="#ccc"/><rect x="4" y="4" width="4" height="4" fill="#ccc"/></pattern>
      <g id="eye"><path d="M-6.300 0c1.800-3.200 4.300-4.600 6.300-4.600s4.500 1.400 6.300 4.600c-1.800 3.200-4.300 4.600-6.300 4.600s-4.500-1.400-6.300-4.600z" fill="#c6c6c6"/><path d="M-6.300 0c1.800-3.200 4.300-4.600 6.300-4.600s4.500 1.400 6.300 4.600" fill="none" stroke="#3e3e3e" stroke-width=".9"/><circle cx="0" cy="0" r="3.100" fill="#2c2c2c"/><circle cx="1" cy="-.9" r="1.100" fill="#f4f4f4"/></g>
      <g id="eyed"><path d="M-6.300 0c1.800-3.200 4.300-4.600 6.300-4.600s4.500 1.400 6.300 4.600c-1.800 3.200-4.300 4.600-6.300 4.600s-4.500-1.400-6.300-4.600z" fill="#888"/><path d="M-6.300 0c1.800-3.200 4.300-4.600 6.300-4.600s4.500 1.400 6.300 4.600" fill="none" stroke="#484848" stroke-width=".9"/><circle cx="0" cy="0" r="3.100" fill="#474747"/><circle cx="1" cy="-.9" r="1.100" fill="#9a9a9a"/></g>
      <g id="adj"><circle cx="0" cy="0" r="4.800" fill="#4a4a4a" stroke="#bdbdbd" stroke-width="1.200"/><path d="M-3.400 3.400a4.800 4.800 0 016.800-6.800z" fill="#bdbdbd"/></g>
      <g id="chain" fill="none" stroke="#b8b8b8" stroke-width="1.400"><rect x="-2.500" y="-6.500" width="5" height="7" rx="2.500"/><rect x="-2.500" y="-.5" width="5" height="7" rx="2.500"/></g>
      <g id="clip"><path d="M3 -2.500h-3.500v5" fill="none" stroke="#e4e4e4" stroke-width="1.200"/><path d="M-3.200 1.500h5.400l-2.700 3.200z" fill="#e4e4e4"/></g>
    </defs>
    <path d="M1347 325h5l-2.500 3z" fill="#d0d0d0"/><path d="M1353 323.500h8M1353 325.500h8M1353 327.500h8M1353 329.500h8" stroke="#d0d0d0"/>
    <g stroke="#cfcfcf" fill="none" stroke-width="1.200"><rect x="1229.500" y="343.500" width="12" height="10"/></g><path d="M1231 352l3-4 2 2 2-3 2.500 5z" fill="#cfcfcf"/><circle cx="1238" cy="346.500" r="1" fill="#cfcfcf"/>
    <use href="#adj" x="1259" y="348.500"/>
    <text x="1283" y="355" font-family="Liberation Serif,serif" font-size="17" text-anchor="middle" fill="#d4d4d4">T</text>
    <g stroke="#d0d0d0" fill="none" stroke-width="1.200"><rect x="1302.500" y="344.500" width="9" height="9"/></g><g fill="#d0d0d0"><rect x="1301" y="343" width="3" height="3"/><rect x="1310" y="343" width="3" height="3"/><rect x="1301" y="352" width="3" height="3"/><rect x="1310" y="352" width="3" height="3"/></g>
    <path d="M1328.500 343.500h5l3 3v8h-8z" fill="#6a6a6a" stroke="#d0d0d0"/><rect x="1325" y="350" width="6" height="6" fill="#bdbdbd"/>
    <rect x="1351.500" y="340.500" width="9" height="18" rx="1" fill="#3c3c3c" stroke="#2e2e2e"/><rect x="1352" y="341" width="8" height="8" fill="#8a8a8a"/>
    <g><rect x="1182.500" y="399.500" width="10" height="10" fill="#6a6a6a" stroke="#7a7a7a"/><rect x="1183" y="400" width="3" height="3" fill="#999"/><rect x="1189" y="400" width="3" height="3" fill="#999"/><rect x="1186" y="403" width="3" height="3" fill="#999"/><rect x="1183" y="406" width="3" height="3" fill="#999"/><rect x="1189" y="406" width="3" height="3" fill="#999"/></g>
    <path d="M1217.800 398.200l-8.500 7.300 2 2.200z" fill="#8e8e8e" stroke="#8e8e8e" stroke-width=".8" stroke-linejoin="round"/><path d="M1202.500 410.500c3 0 5-2 6.500-4l2.500 2.500c-2 2.500-5.500 3.200-9 1.500z" fill="#8e8e8e"/>
    <g stroke="#d4d4d4" fill="none" stroke-width="1.200"><path d="M1231.500 400v10M1226.500 405h10"/></g><path d="M1231.500 398l-3 3h6zM1231.500 412l-3-3h6zM1224.500 405l3-3v6zM1238.500 405l-3-3v6z" fill="#d4d4d4"/>
    <g><rect x="1249.500" y="404.500" width="9" height="7" fill="#cfcfcf"/><path d="M1251.500 404.500v-2.500a2.500 2.500 0 015 0v2.500" fill="none" stroke="#cfcfcf" stroke-width="1.400"/><rect x="1253.500" y="406.500" width="1" height="3" fill="#555"/></g>
    <path d="M1355 430.500h6l-3-3.500z" fill="#f0f0f0"/><path d="M1355 697.500h6l-3 3.500z" fill="#f0f0f0"/>
    <rect x="1339" y="421" width="11" height="3" fill="#7a7a7a"/>
    <use href="#eyed" x="1214.500" y="432.500"/><use href="#eyed" x="1232" y="451.500"/><use href="#eyed" x="1232" y="470.800"/>
    <use href="#eyed" x="1158" y="492.0"/>
    <use href="#eyed" x="1158" y="515.0"/>
    <path d="M1152.500 543.0v-11h11" fill="none" stroke="#6e6e6e"/><path d="M1152.500 543.0h11v-11" fill="none" stroke="#363636"/>
    <path d="M1152.500 565.5v-11h11" fill="none" stroke="#6e6e6e"/><path d="M1152.500 565.5h11v-11" fill="none" stroke="#363636"/>
    <use href="#eye" x="1158" y="583.0"/>
    <path d="M1152.500 611.0v-11h11" fill="none" stroke="#6e6e6e"/><path d="M1152.500 611.0h11v-11" fill="none" stroke="#363636"/>
    <use href="#eyed" x="1158" y="628.0"/>
    <path d="M1152.500 656.0v-11h11" fill="none" stroke="#6e6e6e"/><path d="M1152.500 656.0h11v-11" fill="none" stroke="#363636"/>
    <use href="#eye" x="1158" y="673.0"/>
    <use href="#eye" x="1158" y="696.0"/>
    <use href="#clip" x="1202" y="492.0"/><use href="#adj" x="1216" y="491.5"/><use href="#chain" x="1231.500" y="492.0"/>
    <rect x="1240.5" y="485.5" width="31" height="13" fill="#fff" stroke="#0c0c0c" stroke-width="1.200"/>
    <use href="#clip" x="1202" y="515.0"/><use href="#adj" x="1216" y="514.5"/><use href="#chain" x="1231.500" y="515.0"/>
    <rect x="1240.5" y="508.5" width="31" height="13" fill="#fff" stroke="#0c0c0c" stroke-width="1.200"/>
    <rect x="1193.500" y="531.0" width="31" height="13" fill="url(#chk)" stroke="#0c0c0c" stroke-width="1.200"/>
    <circle cx="1207" cy="537.5" r="1.200" fill="#8a9a6a" transform="translate(0 3)"/>
    <use href="#clip" x="1202" y="560.0"/><use href="#adj" x="1216" y="559.5"/><use href="#chain" x="1231.500" y="560.0"/>
    <rect x="1240.5" y="553.5" width="31" height="13" fill="#fff" stroke="#0c0c0c" stroke-width="1.200"/>
    <rect x="1193.500" y="576.5" width="31" height="13" fill="url(#chk)" stroke="#0c0c0c" stroke-width="1.200"/>
    <g transform="translate(1208.500 583.0)"><path d="M0 -3c1.800 0 2.400 2 2.600 4.500l.9 4.500h-6.500l.8-4.500c.2-2.500.8-4.500 2.200-4.500z" fill="#3a4446"/><path d="M-2 3.500c1-1 3-1 4 0l.6 2.500h-5.400z" fill="#c9aea8"/><circle cx="0" cy="-.3" r="1.100" fill="#f0dcd6"/></g>
    <use href="#adj" x="1200" y="605.0"/><use href="#chain" x="1216" y="605.5"/>
    <rect x="1224.5" y="599.0" width="31" height="13" fill="#fff" stroke="#0c0c0c" stroke-width="1.200"/>
    <use href="#clip" x="1202" y="628.0"/><use href="#adj" x="1216" y="627.5"/><use href="#chain" x="1231.500" y="628.0"/>
    <rect x="1240.5" y="621.5" width="31" height="13" fill="#fff" stroke="#0c0c0c" stroke-width="1.200"/>
    <rect x="1193.500" y="644.0" width="31" height="13" fill="url(#chk)" stroke="#0c0c0c" stroke-width="1.200"/>
    <g transform="translate(0 650.5)"><path d="M1210 -2l2.500-4 1.500 4.500zM1204 4l-2 2 4 .5zM1212 2l3.500 1-2.500 2.500z" fill="#5f8f4a"/><circle cx="1208.500" cy="1.500" r="3.800" fill="#e9aea2"/><circle cx="1208.500" cy="1.500" r="1.800" fill="#d98476"/><circle cx="1212" cy="4" r="2" fill="#efc6b8"/></g>
    <rect x="1193" y="664.5" width="17" height="17" fill="#000"/>
    <path d="M1194 666.5h15" stroke="#fff" stroke-width="1.300" stroke-dasharray="4.500 1.500" stroke-dashoffset="0"/>
    <path d="M1194 669.8h15" stroke="#fff" stroke-width="1.300" stroke-dasharray="4.500 1.500" stroke-dashoffset="3"/>
    <path d="M1194 673.1h15" stroke="#fff" stroke-width="1.300" stroke-dasharray="4.500 1.500" stroke-dashoffset="0"/>
    <path d="M1194 676.4h15" stroke="#fff" stroke-width="1.300" stroke-dasharray="4.500 1.500" stroke-dashoffset="3"/>
    <path d="M1194 679.7h15" stroke="#fff" stroke-width="1.300" stroke-dasharray="4.500 1.500" stroke-dashoffset="0"/>
    <path d="M1191.500 668.0v-5h5M1206.500 663.0h5v5M1211.500 678.0v5h-5M1196.500 683.0h-5v-5" fill="none" stroke="#fff" stroke-width="1.200"/>
    <use href="#chain" x="1216" y="673.0"/>
    <rect x="1224.5" y="666.5" width="31" height="13" fill="#fff" stroke="#0c0c0c" stroke-width="1.200"/>
    <rect x="1177.500" y="689.5" width="31" height="13" fill="#fff" stroke="#0c0c0c" stroke-width="1.200"/>
    <g transform="translate(1328 696.0)"><rect x="-4.500" y="-1.500" width="9" height="7" fill="none" stroke="#cfcfcf" stroke-width="1.200"/><path d="M-2.500 -1.500v-2.500a2.500 2.500 0 015 0v2.500" fill="none" stroke="#cfcfcf" stroke-width="1.200"/><rect x="-.5" y="0" width="1" height="3" fill="#cfcfcf"/></g>
    <g fill="none" stroke="#9a9a9a" stroke-width="1.400"><rect x="1162.500" y="716" width="7" height="5.500" rx="2.700"/><rect x="1167.500" y="716" width="7" height="5.500" rx="2.700"/></g>
    <text x="1190" y="723" font-family="Liberation Serif,serif" font-style="italic" font-size="14" fill="#d0d0d0">fx</text><path d="M1203 722h4l-2 2.500z" fill="#d0d0d0"/>
    <rect x="1217.500" y="713.500" width="12" height="10" fill="#b8b8b8" stroke="#cfcfcf"/><circle cx="1223.500" cy="718.500" r="3" fill="#444"/>
    <use href="#adj" x="1249" y="718.500"/><path d="M1256 722h4l-2 2.500z" fill="#d0d0d0"/>
    <path d="M1270.500 714h5l1.500 1.500h6v8h-12.500z" fill="#a4a4a4"/>
    <path d="M1298.500 713.500h10v10h-6l-4-4z" fill="#b4b4b4"/><path d="M1298.500 719.500h4v4z" fill="#e8e8e8"/>
    <g stroke="#a8a8a8" fill="none" stroke-width="1.200"><path d="M1326.500 716.500l1 8h7l1-8zM1325 715.500h12M1329 713.500h4M1329.500 718v5M1332.500 718v5"/></g>
  </svg>
</div>
</body>
</html>
